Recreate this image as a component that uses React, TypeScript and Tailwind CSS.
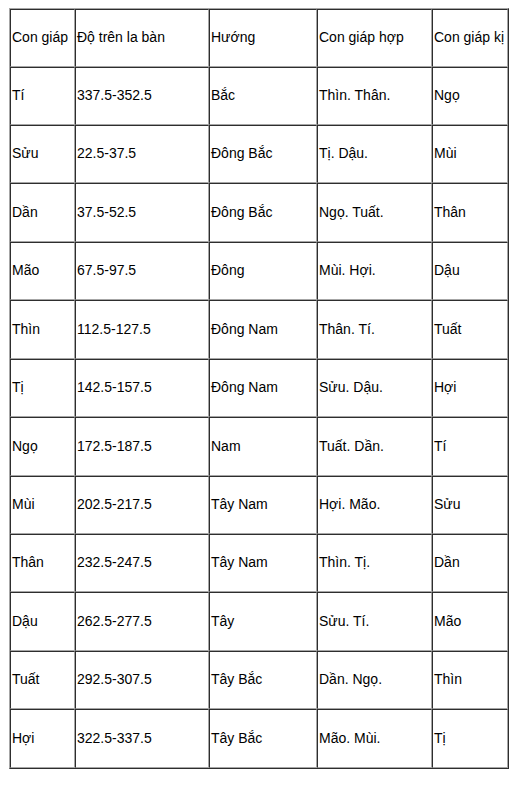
const header = ["Con giáp", "Độ trên la bàn", "Hướng", "Con giáp hợp", "Con giáp kị"];

const rows = [
  { h: "h-[58px]", cells: ["Tí", "337.5-352.5", "Bắc", "Thìn. Thân.", "Ngọ"] },
  { h: "h-[58px]", cells: ["Sửu", "22.5-37.5", "Đông Bắc", "Tị. Dậu.", "Mùi"] },
  { h: "h-[59px]", cells: ["Dần", "37.5-52.5", "Đông Bắc", "Ngọ. Tuất.", "Thân"] },
  { h: "h-[58px]", cells: ["Mão", "67.5-97.5", "Đông", "Mùi. Hợi.", "Dậu"] },
  { h: "h-[59px]", cells: ["Thìn", "112.5-127.5", "Đông Nam", "Thân. Tí.", "Tuất"] },
  { h: "h-[58px]", cells: ["Tị", "142.5-157.5", "Đông Nam", "Sửu. Dậu.", "Hợi"] },
  { h: "h-[59px]", cells: ["Ngọ", "172.5-187.5", "Nam", "Tuất. Dần.", "Tí"] },
  { h: "h-[58px]", cells: ["Mùi", "202.5-217.5", "Tây Nam", "Hợi. Mão.", "Sửu"] },
  { h: "h-[58px]", cells: ["Thân", "232.5-247.5", "Tây Nam", "Thìn. Tị.", "Dần"] },
  { h: "h-[59px]", cells: ["Dậu", "262.5-277.5", "Tây", "Sửu. Tí.", "Mão"] },
  { h: "h-[58px]", cells: ["Tuất", "292.5-307.5", "Tây Bắc", "Dần. Ngọ.", "Thìn"] },
  { h: "h-[59px]", cells: ["Hợi", "322.5-337.5", "Tây Bắc", "Mão. Mùi.", "Tị"] },
];

// header row is 58px too
const allRows = [{ h: "h-[58px]", cells: header }, ...rows];

const colWidths = ["w-[65px]", "w-[134px]", "w-[108px]", "w-[115px]", "w-[76px]"];

export default function App() {
  return (
    <div className="min-h-[785px] bg-white pl-[9px] pt-[8px] font-['Liberation_Sans',Arial,sans-serif] text-[14px] text-black">
      <table className="w-[500px] table-fixed border-separate border-spacing-0 border border-t-[#a6a6a6] border-l-[#a6a6a6] border-r-[#2e2e2e] border-b-[#2e2e2e]">
        <colgroup>
          {colWidths.map((w, i) => (
            <col key={i} className={w} />
          ))}
        </colgroup>
        <tbody>
          {allRows.map((row, r) => (
            <tr key={r}>
              {row.cells.map((c, i) => (
                <td
                  key={i}
                  className={`${row.h} border border-t-[#2e2e2e] border-l-[#2e2e2e] border-r-[#a6a6a6] border-b-[#a6a6a6] pl-px pr-0 pb-[2px] align-middle whitespace-nowrap leading-none`}
                >
                  {c}
                </td>
              ))}
            </tr>
          ))}
        </tbody>
      </table>
    </div>
  );
}
